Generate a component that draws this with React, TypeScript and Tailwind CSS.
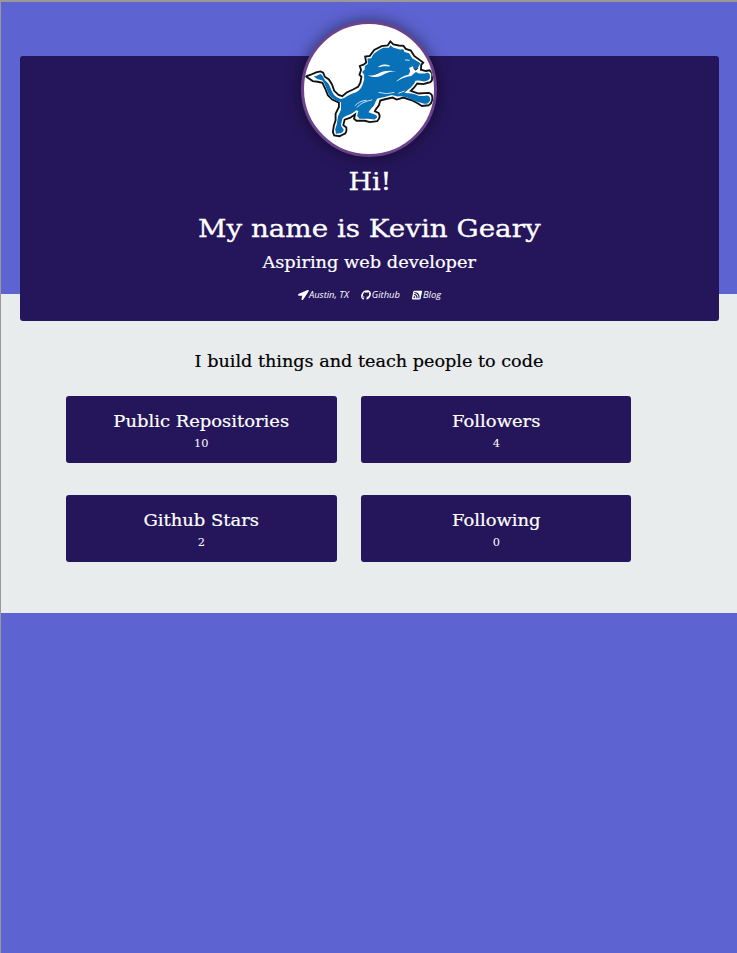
import { FaGithub, FaLocationArrow, FaRssSquare } from 'react-icons/fa';

const OUTLINE =
  'M50 199 L64 194 L80 187 L93 184 L101 188 L106 200 L118 208 L127 222 L134 242 L147 254 L158 258 L171 247 L190 238 L205 230 L212 217 L215 200 L209 194 L214 180 L210 168 L221 164 L229 158 L226 140 L240 138 L253 120 L275 109 L293 107 L301 95 L310 104 L326 107 L340 108 L347 117 L362 122 L372 138 L399 158 L393 165 L392 179 L407 183 L418 181 L426 190 L425 210 Q421 218 412 218 L400 222 L381 220 L372 232 L362 242 L385 250 L415 248 Q426 251 426 262 Q427 278 415 285 L395 287 L382 279 L365 270 L340 262 L320 268 L308 262 L285 267 L271 271 L267 285 L257 298 L255 303 L266 308 Q274 320 262 332 L240 335 L225 331 L200 331 L193 325 L196 312 L182 322 L165 328 L161 344 L170 351 Q173 370 160 372 L150 377 L134 375 L130 365 L133 345 L138 330 L138 310 L148 290 L148 277 L128 268 L115 255 L107 235 L99 218 L85 215 L70 213 Z';
const BODY =
  'M73 199 Q82 199 92 192 C100 194 102 204 107 211 C116 217 121 226 125 239 C130 251 138 263 154 266 C168 263 176 254 190 249 C204 246 212 238 218 225 L223 208 L223 194 L217 186 L225 178 L225 168 L234 162 L233 146 L244 145 L251 132 L266 121 L280 114 L297 114 L301 106 L309 113 L329 119 L340 118 L343 126 L357 130 L366 145 L391 160 L386 168 L383 175 L373 184 L386 190 L404 190 Q419 184 419 200 Q420 211 402 214 L386 211 L376 212 C370 228 358 236 343 247 C354 251 370 248 386 257 L402 257 Q420 252 420 270 Q413 285 397 279 L376 273 C360 265 340 254 323 259 L305 254 L284 260 L263 265 C254 274 257 286 245 293 L236 306 L258 314 Q267 321 254 327 L235 325 L209 325 L202 316 L206 302 L199 300 C184 315 167 314 158 325 L154 345 L162 357 Q162 367 151 368 L139 370 L137 356 L142 340 L145 318 L154 298 L154 276 C136 270 122 262 115 246 C110 234 106 220 99 211 Q83 209 73 199 Z';

function Lion() {
  return (
    <svg viewBox="44 43 387 387" className="size-full" strokeLinejoin="round" strokeLinecap="round" fill="none">
      <path d={OUTLINE} fill="#fff" stroke="#101114" strokeWidth="5.5" strokeLinejoin="miter" />
      <path d={BODY} fill="#0871b8" />
      <path d="M234 196 C257 200 270 184 289 183 Q302 181 318 184 Q296 185 283 192 C266 204 252 202 234 196Z" fill="#fff" />
      <path d="M267 170 Q281 160 299 168 Q281 166 267 170Z" fill="#fff" stroke="#fff" strokeWidth="2" />
      <path d="M267 247 Q290 254 312 247 M202 291 Q214 275 246 269 M196 286 Q208 272 229 270" stroke="#e9f5fc" strokeWidth="2.5" />
      <path d="M318 216 Q330 199 356 193 L360 184 L357 174 L368 169 L374 180 L386 181 L374 188 L363 198 Q338 201 318 216Z" fill="#fff" />
      <path d="M346 150 L357 151 M326 249 L342 243" stroke="#fff" strokeWidth="2.5" />
      <path d="M370 174 L377 181 L383 175" stroke="#101114" strokeWidth="2.5" />
    </svg>
  );
}

const STATS = [
  { label: 'Public Repositories', value: '10' },
  { label: 'Followers', value: '4' },
  { label: 'Github Stars', value: '2' },
  { label: 'Following', value: '0' },
];

export default function App() {
  return (
    <div className="h-[953px] overflow-hidden border-t-2 border-l border-[#999] bg-[#5d63d1] font-['DejaVu_Serif',serif]">
      <header className="h-[291.5px] pt-[54px] pr-[18px] pl-[19px]">
        <div className="relative flex h-[264.5px] flex-col items-center rounded-[3px] bg-[#25165b] text-white">
          <div className="-mt-[35px] mr-px size-[136px] shrink-0 overflow-hidden rounded-full border-[3px] border-[#6d428c] bg-white shadow-[0_0_16px_rgba(0,0,0,0.5)]">
            <Lion />
          </div>
          <h1 className="mt-[7px] scale-x-[1.08] text-[25px] leading-[36px] [-webkit-text-stroke:0.3px]">Hi!</h1>
          <h1 className="mt-[11px] scale-x-[1.11] text-[25px] leading-[36px] whitespace-nowrap [-webkit-text-stroke:0.3px]">My name is Kevin Geary</h1>
          <h2 className="mt-[3px] scale-x-[1.045] text-[17px] leading-[24px] whitespace-nowrap [-webkit-text-stroke:0.2px]">Aspiring web developer</h2>
          <nav className="mt-[13px] flex h-[16px] items-center gap-[12px] font-['Open_Sans',sans-serif] text-[9.4px] leading-[16px] italic">
            <span className="flex items-center gap-px"><FaLocationArrow className="size-[10px] -skew-x-12" />Austin, TX</span>
            <span className="flex items-center gap-px"><FaGithub className="size-[10px] -skew-x-12" />Github</span>
            <span className="flex items-center gap-px"><FaRssSquare className="size-[10px] -skew-x-12" />Blog</span>
          </nav>
        </div>
      </header>
      <main className="h-[319px] bg-[#e8eced] pt-[54px]">
        <h2 className="scale-x-[1.036] text-center text-[17px] leading-[26px] text-black [-webkit-text-stroke:0.2px]">I build things and teach people to code</h2>
        <section className="mt-[22.5px] grid grid-cols-[270.5px_270.5px] gap-x-[24px] gap-y-[32.5px] pl-[65px]">
          {STATS.map((s) => (
            <div key={s.label} className="h-[66.5px] rounded-[3px] bg-[#25165b] pt-[12px] text-center text-white">
              <h3 className="scale-x-[1.055] text-[17px] leading-[26px] [-webkit-text-stroke:0.2px]">{s.label}</h3>
              <p className="scale-x-[1.08] text-[10.5px] leading-[18px]">{s.value}</p>
            </div>
          ))}
        </section>
      </main>
    </div>
  );
}
